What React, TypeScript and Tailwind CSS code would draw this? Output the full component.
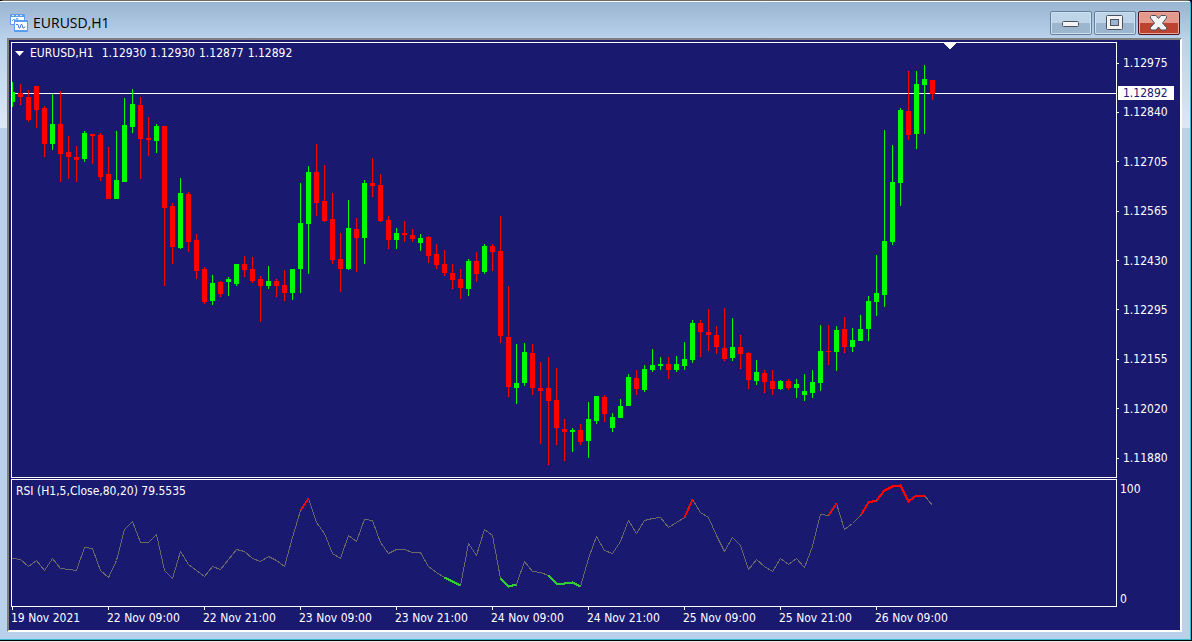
import React from 'react';

// [direction, high, body top, body bottom, low] in pixel rows, one bar every 8px
type Candle = ['up' | 'down', number, number, number, number];

const candles: Candle[] = [
  ['up', 82, 92, 102, 107], ['down', 84, 93, 97, 105], ['down', 90, 97, 120, 122], ['down', 86, 86, 110, 128],
  ['down', 106, 108, 144, 157], ['up', 94, 124, 144, 150], ['down', 91, 124, 154, 182], ['down', 136, 152, 157, 179],
  ['down', 146, 157, 160, 182], ['up', 131, 133, 159, 162], ['down', 134, 134, 136, 164], ['down', 133, 135, 177, 181],
  ['down', 147, 174, 199, 199], ['up', 131, 180, 199, 199], ['up', 98, 125, 182, 182], ['up', 89, 104, 127, 133],
  ['down', 97, 105, 139, 179], ['down', 117, 138, 140, 156], ['up', 124, 126, 141, 153], ['down', 126, 126, 208, 286],
  ['down', 203, 206, 247, 264], ['up', 178, 193, 248, 249], ['down', 192, 194, 242, 252], ['down', 234, 240, 271, 279],
  ['down', 267, 269, 302, 304], ['up', 275, 283, 301, 305], ['down', 281, 282, 294, 297], ['up', 277, 279, 282, 296],
  ['up', 264, 264, 284, 286], ['down', 256, 264, 270, 277], ['down', 257, 269, 281, 283], ['down', 276, 279, 286, 322],
  ['up', 266, 281, 286, 289], ['down', 279, 281, 286, 297], ['down', 270, 285, 293, 301], ['up', 269, 269, 293, 300],
  ['up', 183, 223, 269, 293], ['up', 166, 172, 224, 274], ['down', 144, 172, 203, 216], ['down', 165, 201, 221, 222],
  ['down', 193, 219, 260, 264], ['down', 233, 259, 269, 292], ['up', 200, 228, 269, 270], ['down', 218, 229, 238, 272],
  ['up', 180, 183, 238, 264], ['down', 158, 183, 186, 197], ['down', 174, 185, 221, 222], ['down', 216, 220, 240, 249],
  ['up', 228, 233, 240, 249], ['down', 221, 233, 235, 242], ['down', 229, 235, 239, 242], ['up', 234, 238, 243, 251],
  ['down', 236, 237, 256, 263], ['down', 244, 254, 265, 269], ['down', 250, 264, 273, 276], ['down', 264, 273, 280, 289],
  ['down', 269, 279, 288, 299], ['up', 259, 261, 289, 296], ['down', 252, 261, 274, 282], ['up', 244, 246, 272, 274],
  ['down', 244, 246, 252, 271], ['down', 216, 251, 336, 343], ['down', 286, 337, 387, 397], ['up', 344, 383, 388, 404],
  ['up', 343, 352, 383, 386], ['down', 344, 353, 388, 395], ['down', 362, 388, 391, 444], ['down', 357, 388, 401, 465],
  ['down', 368, 400, 428, 445], ['down', 419, 429, 432, 461], ['up', 428, 430, 432, 452], ['down', 424, 430, 442, 445],
  ['up', 402, 419, 441, 458], ['up', 396, 396, 421, 424], ['down', 395, 397, 414, 422], ['up', 413, 417, 428, 432],
  ['up', 399, 406, 418, 418], ['up', 374, 377, 406, 406], ['down', 370, 378, 389, 395], ['up', 365, 369, 390, 392],
  ['up', 349, 365, 370, 372], ['up', 357, 364, 366, 370], ['down', 357, 364, 370, 379], ['up', 356, 364, 370, 372],
  ['up', 342, 359, 366, 370], ['up', 320, 323, 360, 363], ['down', 320, 323, 332, 357], ['down', 309, 332, 335, 351],
  ['down', 326, 335, 347, 354], ['down', 308, 348, 359, 361], ['up', 318, 347, 358, 361], ['down', 335, 347, 354, 369],
  ['down', 352, 353, 380, 389], ['up', 360, 372, 381, 385], ['down', 370, 373, 382, 393], ['down', 370, 381, 389, 395],
  ['up', 380, 381, 389, 390], ['down', 379, 381, 388, 390], ['up', 379, 384, 388, 398], ['up', 374, 391, 395, 401],
  ['up', 370, 382, 393, 398], ['up', 325, 351, 383, 391], ['down', 325, 351, 352, 365], ['up', 326, 330, 352, 371],
  ['down', 317, 329, 347, 353], ['up', 328, 340, 347, 352], ['up', 315, 329, 341, 341], ['up', 296, 301, 329, 341],
  ['up', 255, 293, 302, 316], ['up', 130, 241, 295, 307], ['up', 145, 182, 242, 245], ['up', 108, 110, 183, 206],
  ['down', 71, 111, 135, 140], ['up', 71, 84, 134, 149], ['up', 65, 79, 85, 134], ['down', 80, 80, 94, 100],
];

const rsi = [
  558, 559, 566, 560, 570, 558, 568, 569, 570, 547, 548, 570, 577, 560, 529, 521, 542, 542, 534, 570,
  578, 551, 564, 570, 576, 566, 569, 559, 549, 551, 558, 561, 556, 560, 566, 537, 510, 498, 522, 533,
  553, 558, 535, 541, 519, 520, 542, 553, 549, 549, 552, 552, 566, 572, 577, 581, 585, 543, 555, 529,
  535, 578, 586, 584, 561, 571, 572, 575, 583, 583, 582, 586, 558, 536, 550, 553, 541, 520, 533, 520,
  518, 517, 527, 522, 517, 499, 512, 517, 535, 551, 537, 545, 569, 559, 566, 571, 558, 564, 558, 567,
  546, 514, 515, 503, 529, 523, 515, 502, 500, 490, 486, 485, 501, 495, 495, 505,
];

const overbought = [[36, 37], [84, 85], [102, 103], [106, 114]];
const oversold = [[54, 56], [61, 63], [67, 71]];

const prices = ['1.12975', '1.12840', '1.12705', '1.12565', '1.12430', '1.12295', '1.12155', '1.12020', '1.11880'];

const times = [
  '19 Nov 2021', '22 Nov 09:00', '22 Nov 21:00', '23 Nov 09:00', '23 Nov 21:00',
  '24 Nov 09:00', '24 Nov 21:00', '25 Nov 09:00', '25 Nov 21:00', '26 Nov 09:00',
];

function rsiPoints(from = 0, to = rsi.length - 1) {
  return rsi
    .slice(from, to + 1)
    .map((y, i) => `${(from + i) * 8 + 0.5},${y - 479.5}`)
    .join(' ');
}

function WindowIcon() {
  return (
    <svg width="18" height="18" viewBox="0 0 18 18" aria-hidden="true">
      <rect x="0" y="0" width="15" height="11" rx="1" fill="#5b9bf0" />
      <rect x="1" y="3" width="13" height="7" fill="#fff" />
      <path d="M2 1.5h2M6 1.5h2M10 1.5h2" stroke="#d6e7fd" />
      <path d="M2 7l2-2 1 2 2-3 1 2" fill="none" stroke="#5b9bf0" />
      <rect x="4" y="6" width="14" height="12" rx="1" fill="#5b9bf0" />
      <rect x="5" y="8" width="12" height="8" fill="#fff" />
      <path d="M6 10.500h2l1 3.500h1l1-3.500h1l1 3.500h1l1-1.500" fill="none" stroke="#3f7fd8" />
    </svg>
  );
}

function TitleBar() {
  const glass =
    'flex h-6 w-[42px] items-center justify-center rounded-xs border border-[#64809c] bg-linear-to-b from-[#bdd4e9] from-50% to-[#9cb6d0] to-50% shadow-[inset_0_0_0_1px_#cfe0f0]';
  return (
    <header className="flex h-9 items-center justify-between pr-0.5">
      <div className="flex items-center gap-[5px] pt-[6px]">
        <WindowIcon />
        <h1 className="font-['Open_Sans',sans-serif] text-[14px] leading-5 text-black">EURUSD,H1</h1>
      </div>
      <div className="flex gap-0.5 pt-[6px]">
        <button className={glass} aria-label="Minimize">
          <svg width="18" height="8" viewBox="0 0 18 8">
            <rect x="0.500" y="2.500" width="16" height="5" rx="1" fill="#f4f4f4" stroke="#4a5260" />
          </svg>
        </button>
        <button className={glass} aria-label="Maximize">
          <svg width="18" height="16" viewBox="0 0 18 16">
            <rect x="0.500" y="0.500" width="16" height="14" rx="1" fill="#f4f4f4" stroke="#4a5260" />
            <rect x="4.500" y="4.500" width="8" height="6" fill="#9cb6d0" stroke="#4a5260" />
          </svg>
        </button>
        <button
          className="flex h-6 w-[42px] items-center justify-center rounded-xs border border-[#4a1418] bg-linear-to-b from-[#e39a8c] from-50% to-[#bb4330] to-50% shadow-[inset_0_0_0_1px_#e8a89c]"
          aria-label="Close"
        >
          <svg width="18" height="16" viewBox="0 0 18 16">
            <path
              d="M1.500 0.500h4.500l2.500 3 2.500-3h4.500l1 1v1.500l-4 5 4 4.500v1.500l-1 1h-4.500l-2.500-3-2.500 3h-4.500l-1-1v-1.500l4-4.500-4-5v-1.500z"
              fill="#f4f4f4"
              stroke="#4a5260"
              strokeLinejoin="round"
            />
          </svg>
        </button>
      </div>
    </header>
  );
}

function PricePane() {
  return (
    <section className="relative min-w-0 flex-1 border border-white">
      <svg className="absolute inset-0 h-full w-full" shapeRendering="crispEdges" role="img" aria-label="EURUSD hourly candles">
        <rect x="0" y="50" width="100%" height="1" fill="#fff" />
        {candles.map(([dir, high, top, bottom, low], i) => (
          <g key={i} fill={dir === 'up' ? '#00ff00' : '#ff0000'}>
            <rect x={i * 8} y={high - 43} width="1" height={low - high} />
            <rect x={i * 8 - 2} y={top - 43} width="5" height={bottom - top} />
          </g>
        ))}
        <path d="M931 0h13l-6.500 6.500z" fill="#fff" />
      </svg>
      <div className="absolute top-0.5 left-[3px] flex items-center gap-[6px] leading-4">
        <button aria-label="One click trading">
          <svg width="9" height="5" viewBox="0 0 9 5">
            <path d="M0 0h9l-4.500 5z" fill="#fff" />
          </svg>
        </button>
        <p className="flex gap-2">
          <span>EURUSD,H1</span>
          <span className="flex gap-1">
            <span>1.12930</span>
            <span>1.12930</span>
            <span>1.12877</span>
            <span>1.12892</span>
          </span>
        </p>
      </div>
    </section>
  );
}

function PriceAxis() {
  return (
    <div className="relative flex w-[63px] flex-col justify-between pt-[13px] pb-3">
      {prices.map((price) => (
        <div key={price} className="flex items-center gap-1 leading-4">
          <span className="h-px w-0.5 bg-white" />
          {price}
        </div>
      ))}
      <div className="absolute top-11 right-[6px] left-px bg-white pl-[5px] leading-[14px] text-[#191970]">1.12892</div>
    </div>
  );
}

function RsiPane() {
  return (
    <section className="relative min-w-0 flex-1 border border-white">
      <svg className="absolute inset-0 h-full w-full" shapeRendering="crispEdges" fill="none" role="img" aria-label="RSI">
        <polyline points={rsiPoints()} stroke="#696969" />
        {overbought.map(([from, to]) => (
          <polyline key={from} points={rsiPoints(from, to)} stroke="#ff0000" strokeWidth="2" />
        ))}
        {oversold.map(([from, to]) => (
          <polyline key={from} points={rsiPoints(from, to)} stroke="#32cd32" strokeWidth="2" />
        ))}
      </svg>
      <p className="absolute top-[3px] left-1 leading-4">RSI (H1,5,Close,80,20) 79.5535</p>
    </section>
  );
}

export default function App() {
  return (
    <div className="flex h-screen min-h-96 flex-col border-b border-[#e8e8e8] bg-black font-['DejaVu_Sans_Condensed','DejaVu_Sans',sans-serif] text-[12px] text-white">
      <main className="mr-px mb-px flex min-h-0 flex-1 flex-col rounded-t-sm border-t border-r border-b border-t-[#6b6b6b] border-r-[#35bcd0] border-b-[#35bcd0] bg-[#b9d1ea]">
        <div className="flex min-h-0 flex-1 flex-col border-t border-white bg-[linear-gradient(#99b4d1,#b9d1ea_36px,#dce8f5_126px,#b9d1ea_126px)] pr-2 pb-[7px] pl-[7px]">
          <div className="pl-[3px]">
            <TitleBar />
          </div>
          <div className="flex min-h-0 flex-1 flex-col border-2 border-t-[#808080] border-r-white border-b-white border-l-[#808080] bg-[#191970] pt-0.5 pl-0.5">
            <div className="flex min-h-0 flex-1">
              <PricePane />
              <PriceAxis />
            </div>
            <div className="mt-px flex h-32">
              <RsiPane />
              <div className="flex w-[63px] flex-col justify-between pt-0.5 pl-[3px] leading-4">
                <span>100</span>
                <span>0</span>
              </div>
            </div>
            <footer className="flex h-[23px] overflow-hidden">
              {times.map((time) => (
                <div key={time} className="w-24 shrink-0">
                  <div className="ml-px h-[3px] w-px bg-white" />
                  <time className="block leading-4 whitespace-nowrap">{time}</time>
                </div>
              ))}
            </footer>
          </div>
        </div>
      </main>
    </div>
  );
}
